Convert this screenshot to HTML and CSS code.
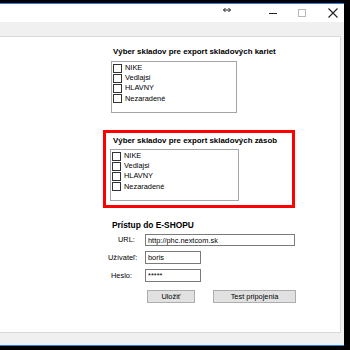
FILE: index.html
```html
<!DOCTYPE html>
<html>
<head>
<meta charset="utf-8">
<link rel="stylesheet" href="styles.css">
</head>
<body>
<div class="window">
  <div class="titlebar">
    <svg class="ctl ctl-resize" width="8" height="6" viewBox="0 0 8 6"><path d="M0.5 3H7.5M0.5 3L2.5 1M0.5 3L2.5 5M7.5 3L5.5 1M7.5 3L5.5 5" stroke="#222" stroke-width="1" fill="none"/></svg>
    <svg class="ctl ctl-min" width="10" height="10" viewBox="0 0 10 10"><path d="M1 5.5H9" stroke="#222" stroke-width="1"/></svg>
    <svg class="ctl ctl-max" width="10" height="10" viewBox="0 0 10 10"><rect x="1.5" y="1.5" width="7" height="7" fill="none" stroke="#b8b8b8" stroke-width="1"/></svg>
    <svg class="ctl ctl-close" width="12" height="12" viewBox="0 0 12 12"><path d="M1.5 1.5L10.5 10.5M10.5 1.5L1.5 10.5" stroke="#222" stroke-width="1.1"/></svg>
  </div>
  <div class="client">
    <div class="panel">
      <div class="column">
        <div class="group group-cards">
          <div class="heading">Výber skladov pre export skladových kariet</div>
          <div class="listbox">
            <div class="item"><span class="check"></span>NIKE</div>
            <div class="item"><span class="check"></span>Vedlajsi</div>
            <div class="item"><span class="check"></span>HLAVNY</div>
            <div class="item"><span class="check"></span>Nezaradené</div>
          </div>
        </div>
        <div class="group group-stock">
          <div class="heading">Výber skladov pre export skladových zásob</div>
          <div class="listbox">
            <div class="item"><span class="check"></span>NIKE</div>
            <div class="item"><span class="check"></span>Vedlajsi</div>
            <div class="item"><span class="check"></span>HLAVNY</div>
            <div class="item"><span class="check"></span>Nezaradené</div>
          </div>
        </div>
        <div class="group group-shop">
          <div class="heading heading-shop">Prístup do E-SHOPU</div>
          <div class="form">
            <div class="label label-url">URL:</div>
            <div class="input input-wide">http://phc.nextcom.sk</div>
            <div class="label label-user">Užívateľ:</div>
            <div class="input input-short">boris</div>
            <div class="label label-pass">Heslo:</div>
            <div class="input input-short">*****</div>
          </div>
          <div class="buttons">
            <div class="button button-save">Uložiť</div>
            <div class="button button-test">Test pripojenia</div>
          </div>
        </div>
      </div>
    </div>
  </div>
</div>
</body>
</html>
```
FILE: styles.css
```css
* { box-sizing: border-box; }
html, body { margin: 0; padding: 0; }
body {
  background: #000;
  width: 350px;
  height: 350px;
  overflow: hidden;
  font-family: "Liberation Sans", Arial, sans-serif;
  color: #000;
}
.window {
  margin-top: 3px;
  width: 344px;
  height: 343px;
  background: #f0f0f0;
  border-top: 1px solid #2a7bd3;
  border-bottom: 1px solid #2a7bd3;
  display: flex;
  flex-direction: column;
}
.titlebar {
  height: 18px;
  background: #fff;
  display: flex;
  align-items: center;
  flex-shrink: 0;
}
.ctl { display: block; flex-shrink: 0; }
.ctl-resize { margin-left: 223px; margin-top: -6px; }
.ctl-min { margin-left: 37px; }
.ctl-max { margin-left: 19px; }
.ctl-close { margin-left: 20px; }
.client {
  flex: 1;
  padding: 14px 3px 12px 0;
  display: flex;
}
.panel {
  flex: 1;
  background: #fff;
  border: 1px solid #dadada;
  border-left: none;
}
.column {
  padding-left: 103px;
  padding-top: 10px;
}
.heading {
  font-size: 7.9px;
  font-weight: bold;
  line-height: 10px;
  height: 10px;
  white-space: nowrap;
}
.group-cards { padding-left: 8px; }
.group-cards .heading { padding-left: 2px; }
.listbox {
  margin-top: 4px;
  width: 126px;
  height: 52px;
  border: 1px solid #a5a5a5;
  background: #fff;
  padding-top: 1px;
  padding-left: 1px;
}
.item {
  height: 10.2px;
  line-height: 10px;
  font-size: 7.4px;
  display: flex;
  align-items: center;
  white-space: nowrap;
}
.check {
  width: 9px;
  height: 9px;
  border: 1px solid #333;
  background: #fff;
  margin-right: 3px;
  flex-shrink: 0;
}
.group-stock {
  margin-top: 17px;
  width: 192px;
  height: 78px;
  border: 3px solid #ff0000;
  padding-top: 3px;
}
.group-stock .heading { padding-left: 7px; }
.group-stock .listbox {
  margin-left: 4px;
  margin-top: 3px;
  width: 129px;
}
.group-shop {
  margin-top: 12px;
  padding-left: 8px;
}
.heading-shop {
  font-size: 8.4px;
  padding-left: 1px;
}
.form {
  margin-top: 4px;
  display: grid;
  grid-template-columns: 34px auto;
  row-gap: 5px;
  align-items: center;
}
.label {
  font-size: 7.4px;
  line-height: 12px;
  white-space: nowrap;
}
.label-url { padding-left: 7px; }
.label-user { padding-left: 0; margin-left: -3px; }
.label-pass { padding-left: 0; }
.input {
  height: 13px;
  border: 1px solid #7a7a7a;
  background: #fff;
  font-size: 7.4px;
  line-height: 11px;
  padding-left: 2px;
  white-space: nowrap;
}
.input-wide { width: 150px; height: 12px; }
.input-short { width: 56px; }
.buttons {
  margin-top: 8px;
  display: flex;
  padding-left: 36px;
}
.button {
  height: 13px;
  border: 1px solid #adadad;
  background: #e1e1e1;
  font-size: 7.4px;
  line-height: 11px;
  text-align: center;
}
.button-save { width: 48px; }
.button-test { width: 83px; margin-left: 18px; }
```
